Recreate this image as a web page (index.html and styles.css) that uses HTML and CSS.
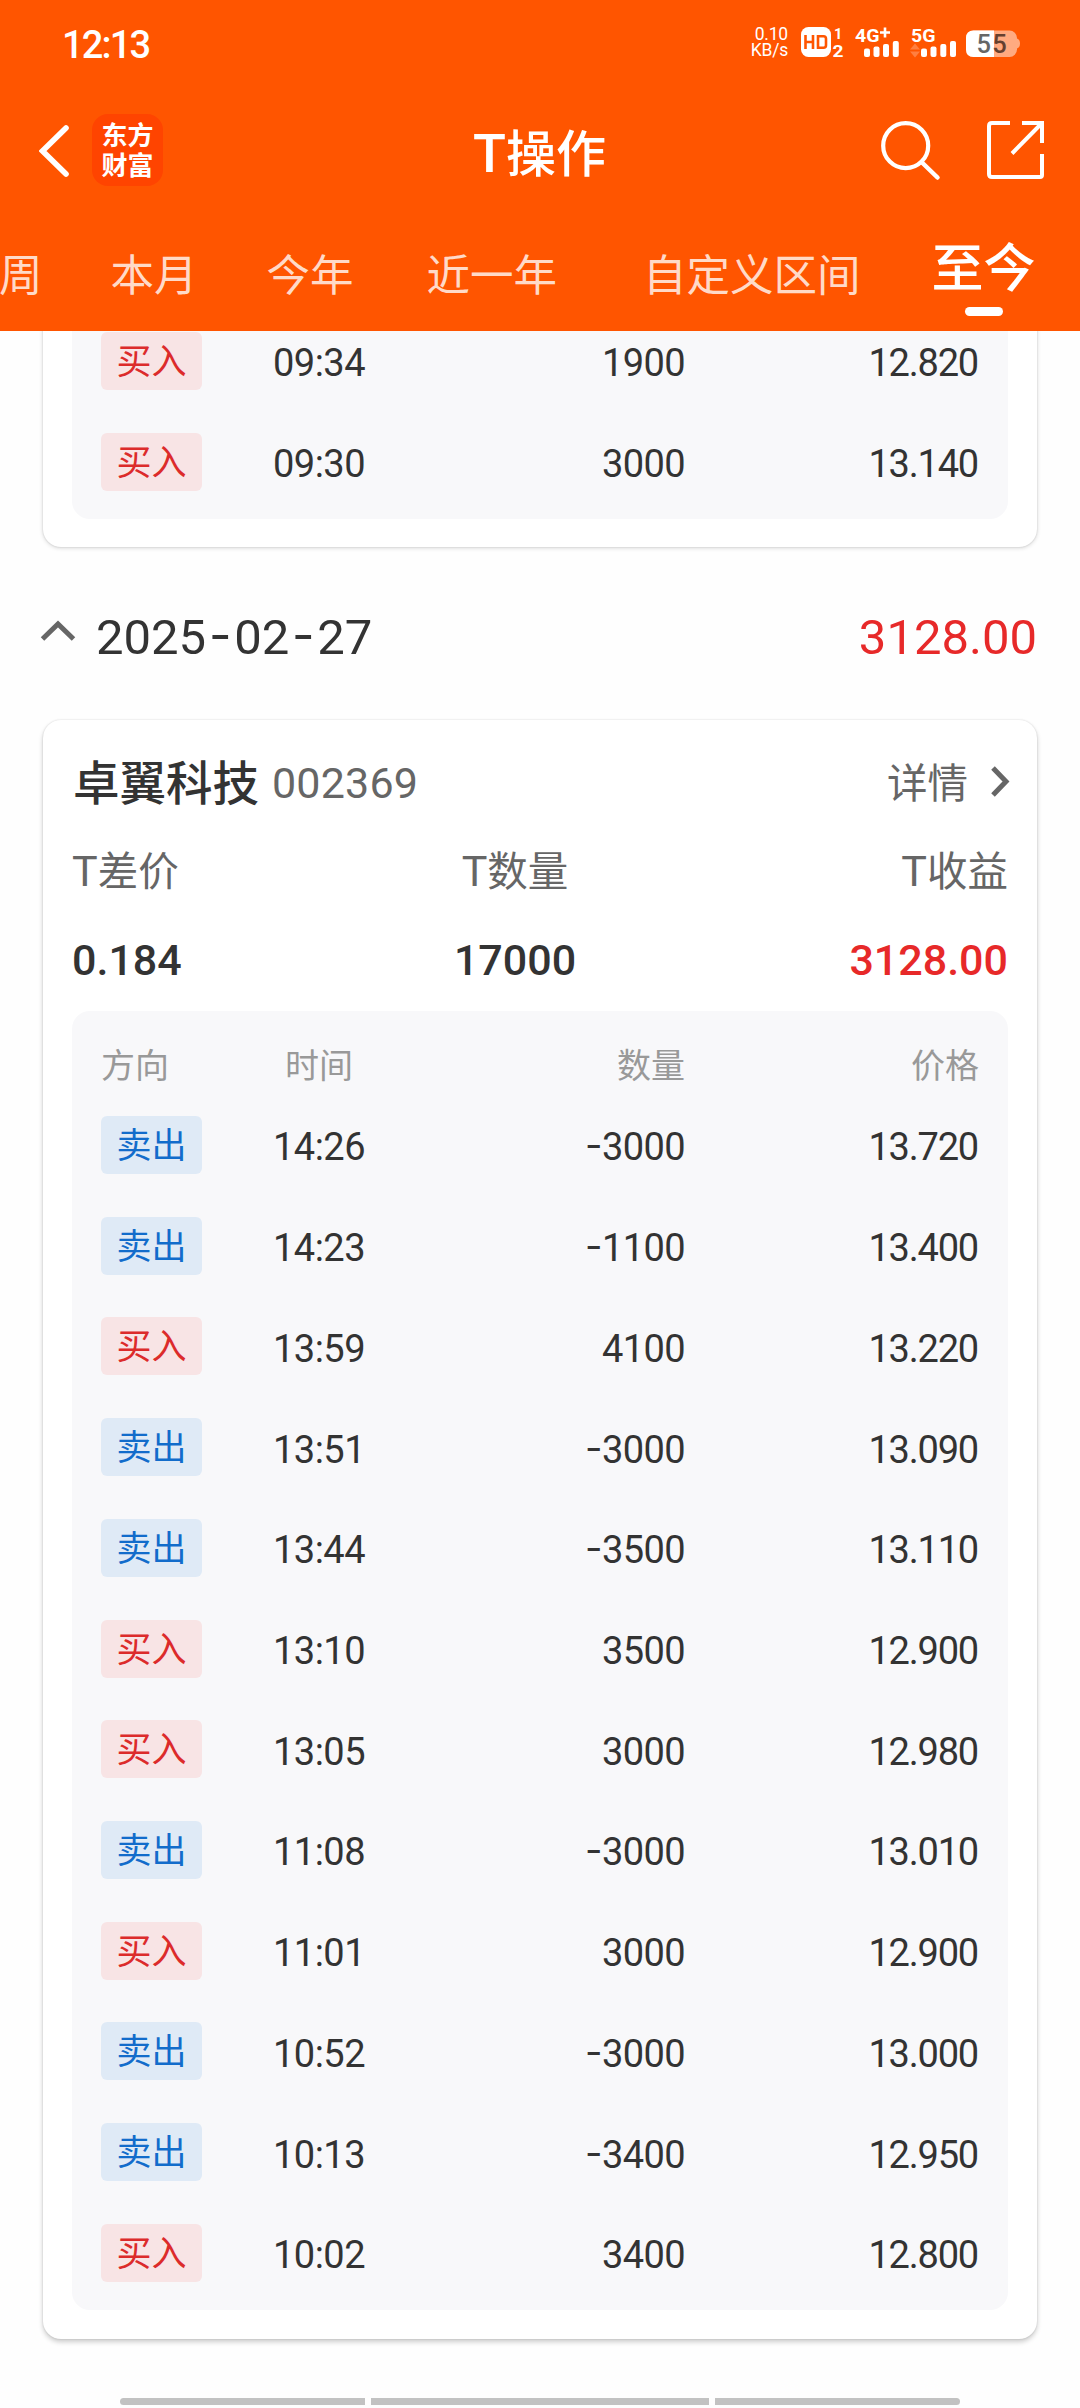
FILE: index.html
```html
<!DOCTYPE html>
<html lang="zh-CN">
<head>
<meta charset="utf-8">
<title>T操作</title>
<link rel="stylesheet" href="styles.css">
</head>
<body>
<div class="screen">
<header class="header">
  <div class="status">
    <span class="clock">12:13</span>
    <div class="status-icons">
      <div class="speed"><span>0.10</span><span>KB/s</span></div>
      <svg class="status-svg" width="244" height="36" viewBox="796 25 244 36">
        <rect x="801" y="27" width="30" height="30" rx="7.5" fill="#fff"/>
        <g fill="none" stroke="#ff5500" stroke-width="2.6"><path d="M805.5 35v14M813 35v14M805.5 42h7.5M818 36.3h5.5q2.5 0 2.5 2.5v6.400q0 2.500-2.500 2.500h-5.500z"/></g>
        <g fill="#fff" class="svg-text">
          <text x="834" y="38.500" font-size="14.500">1</text>
          <text x="832.500" y="57" font-size="16.500" textLength="11" lengthAdjust="spacingAndGlyphs">2</text>
          <text x="855" y="41.800" font-size="19" textLength="24.500" lengthAdjust="spacingAndGlyphs">4G</text>
          <text x="911" y="41.800" font-size="19" textLength="24.500" lengthAdjust="spacingAndGlyphs">5G</text>
        </g>
        <path d="M880 32.500h10M885 27.500v10" stroke="#fff" stroke-width="2.600"/>
        <g fill="#fff">
          <rect x="864" y="48.500" width="6" height="8.500" rx="2"/><rect x="873.500" y="46.500" width="6" height="10.500" rx="2"/><rect x="883" y="44" width="6" height="13" rx="2"/><rect x="892.800" y="41" width="6" height="16" rx="2"/>
          <rect x="921" y="48.500" width="6" height="8.500" rx="2"/><rect x="930.500" y="46.500" width="6" height="10.500" rx="2"/><rect x="940.300" y="44" width="6" height="13" rx="2"/><rect x="950" y="41" width="6" height="16" rx="2"/>
        </g>
        <path d="M915 43.500l5 6h-10zM915 57.500l5-6h-10z" fill="#ff7f40"/>
        <rect x="966" y="30.500" width="51" height="26.500" rx="7.500" fill="#ffaa80"/>
        <path d="M1017 38.500q3 1 3 5t-3 5z" fill="#ffaa80"/>
        <path d="M973.500 30.500H994V57h-20.500q-7.500 0-7.500-7.500v-11.500q0-7.500 7.500-7.500z" fill="#fff"/>
        <text class="battery-text" x="976.500" y="53" font-size="25.500" fill="#666">5</text>
        <text class="battery-text" x="992.300" y="53" font-size="25.500" fill="#66402f">5</text>
      </svg>
    </div>
  </div>
  <div class="titlebar">
    <div class="left">
      <svg width="32" height="56" viewBox="39 123 32 56"><path d="M66 128L42.500 151L66 174" fill="none" stroke="#fff" stroke-width="5.600" stroke-linecap="round"/></svg>
      <div class="logo"><span>东方</span><span>财富</span></div>
    </div>
    <h1><span class="t">T</span>操作</h1>
    <div class="right">
      <svg width="62" height="62" viewBox="880 119 62 62"><circle cx="905.700" cy="145.700" r="22.500" fill="none" stroke="#fff" stroke-width="4.200"/><path d="M922 162.500L937.500 177.500" stroke="#fff" stroke-width="4.500" stroke-linecap="round"/></svg>
      <svg width="62" height="62" viewBox="985 119 62 62"><path d="M1010 123H992q-3 0-3 3v48q0 3 3 3h48q2 0 2-2V154M1042 143V123H1022M1042 123L1012 153.500" fill="none" stroke="#fff" stroke-width="4"/></svg>
    </div>
  </div>
  <nav class="tabs">
    <span class="tab t-week">周</span>
    <span class="tab t-month">本月</span>
    <span class="tab t-year">今年</span>
    <span class="tab t-last">近一年</span>
    <span class="tab t-custom">自定义区间</span>
    <span class="tab active">至今</span>
  </nav>
</header>

<main class="content">
  <section class="card card-cut">
    <div class="panel panel-cut">
      <div class="row"><span class="tag buy">买入</span><span class="time">09:34</span><span class="num">1900</span><span class="num price">12.820</span></div>
      <div class="row"><span class="tag buy">买入</span><span class="time">09:30</span><span class="num">3000</span><span class="num price">13.140</span></div>
    </div>
  </section>

  <div class="day">
    <svg width="36" height="24" viewBox="40 619 36 24"><path d="M42.500 639L58 624L73.500 639" fill="none" stroke="#666" stroke-width="5"/></svg>
    <span class="date">2025<span class="dash">-</span>02<span class="dash">-</span>27</span>
    <span class="day-total">3128.00</span>
  </div>

  <section class="card">
    <div class="stock">
      <span class="name">卓翼科技</span>
      <span class="code">002369</span>
      <span class="detail">详情</span>
      <svg width="20" height="34" viewBox="990 764 20 34"><path d="M993 767L1006 780.500L993 794" fill="none" stroke="#666" stroke-width="5"/></svg>
    </div>
    <div class="summary labels"><span><span class="t">T</span>差价</span><span><span class="t">T</span>数量</span><span><span class="t">T</span>收益</span></div>
    <div class="summary values"><span>0.184</span><span>17000</span><span class="red">3128.00</span></div>
    <div class="panel">
      <div class="row head"><span>方向</span><span class="time">时间</span><span class="num">数量</span><span class="num">价格</span></div>
      <div class="row"><span class="tag sell">卖出</span><span class="time">14:26</span><span class="num"><span class="dash">-</span>3000</span><span class="num price">13.720</span></div>
      <div class="row"><span class="tag sell">卖出</span><span class="time">14:23</span><span class="num"><span class="dash">-</span>1100</span><span class="num price">13.400</span></div>
      <div class="row"><span class="tag buy">买入</span><span class="time">13:59</span><span class="num">4100</span><span class="num price">13.220</span></div>
      <div class="row"><span class="tag sell">卖出</span><span class="time">13:51</span><span class="num"><span class="dash">-</span>3000</span><span class="num price">13.090</span></div>
      <div class="row"><span class="tag sell">卖出</span><span class="time">13:44</span><span class="num"><span class="dash">-</span>3500</span><span class="num price">13.110</span></div>
      <div class="row"><span class="tag buy">买入</span><span class="time">13:10</span><span class="num">3500</span><span class="num price">12.900</span></div>
      <div class="row"><span class="tag buy">买入</span><span class="time">13:05</span><span class="num">3000</span><span class="num price">12.980</span></div>
      <div class="row"><span class="tag sell">卖出</span><span class="time">11:08</span><span class="num"><span class="dash">-</span>3000</span><span class="num price">13.010</span></div>
      <div class="row"><span class="tag buy">买入</span><span class="time">11:01</span><span class="num">3000</span><span class="num price">12.900</span></div>
      <div class="row"><span class="tag sell">卖出</span><span class="time">10:52</span><span class="num"><span class="dash">-</span>3000</span><span class="num price">13.000</span></div>
      <div class="row"><span class="tag sell">卖出</span><span class="time">10:13</span><span class="num"><span class="dash">-</span>3400</span><span class="num price">12.950</span></div>
      <div class="row"><span class="tag buy">买入</span><span class="time">10:02</span><span class="num">3400</span><span class="num price">12.800</span></div>
    </div>
  </section>
</main>

<div class="gesture"><i></i><i></i><i></i></div>
</div>
</body>
</html>
```
FILE: styles.css
```css
* { box-sizing: border-box; }
body {
  margin: 0;
  background: #fefefe;
  color: #333;
  font-family: Roboto, "Noto Sans CJK SC", sans-serif;
}
svg { display: block; flex: none; }
.screen {
  width: 1080px;
  height: 2408px;
  display: flex;
  flex-direction: column;
  overflow: hidden;
}

/* Header */
.header {
  height: 331px;
  flex: none;
  background: #ff5500;
  color: #fff;
}
.status {
  height: 88px;
  padding: 0 40px 0 62px;
  display: flex;
  justify-content: space-between;
}
.clock { font-size: 38px; font-weight: 500; line-height: 91px; letter-spacing: -1.8px; }
.status-icons { display: flex; gap: 8px; padding-top: 25px; }
.speed {
  display: flex;
  flex-direction: column;
  padding-top: 2px;
  font-size: 17.5px;
  line-height: 15.5px;
  text-align: right;
  letter-spacing: -0.2px;
}
.svg-text { font-weight: 700; }
.battery-text { font-weight: 500; }

.titlebar {
  height: 126px;
  padding: 0 33px 0 39px;
  display: grid;
  grid-template-columns: 1fr auto 1fr;
  align-items: center;
}
.left { display: flex; align-items: center; gap: 21px; }
.logo {
  width: 71px;
  height: 72px;
  margin-top: -2px;
  padding-top: 2px;
  border-radius: 16px;
  background: #ff4400;
  display: flex;
  flex-direction: column;
  justify-content: center;
  align-items: center;
  font-size: 26px;
  font-weight: 700;
  line-height: 30px;
}
h1 { margin: 8px 7px 0 0; font-size: 50px; font-weight: 500; line-height: 60px; }
h1 .t { font-size: 54px; line-height: 1; }
.right { display: flex; justify-content: flex-end; gap: 43px; margin-top: -3px; }

.tabs {
  height: 117px;
  display: flex;
  align-items: flex-start;
  white-space: nowrap;
}
.tab { font-size: 43.5px; line-height: 60px; padding-top: 33px; color: #ffdac8; }
.t-week { margin-left: -1px; }
.t-month { margin-left: 68px; }
.t-year { margin-left: 69px; }
.t-last { margin-left: 73px; }
.t-custom { margin-left: 86px; }
.active {
  margin-left: 71px;
  font-size: 52px;
  font-weight: 500;
  color: #fff;
  padding-top: 26px;
  display: flex;
  flex-direction: column;
  align-items: center;
  gap: 7px;
}
.active::after {
  content: "";
  width: 38px;
  height: 9px;
  border-radius: 5px;
  background: #fff;
}

/* Scrolling content */
.content { flex: 1; min-height: 0; overflow: hidden; padding: 0 43px; }
.card {
  height: 1619px;
  padding: 30px 29px 29px;
  border-radius: 18px;
  background: #fff;
  box-shadow: 0 3px 5px rgba(0, 0, 0, .2), 0 0 2px rgba(0, 0, 0, .14);
}
.card-cut { height: auto; margin-top: -20.46px; padding: 0 29px 28px; box-shadow: 0 1px 4px rgba(0, 0, 0, .16), 0 0 2px rgba(0, 0, 0, .14); }
.panel {
  padding: 0 29px 7px;
  border-radius: 18px;
  background: #f8f8fa;
}
.row {
  height: 100.73px;
  display: grid;
  grid-template-columns: 101px 234px 1fr 294px;
  align-items: center;
  font-size: 38px;
  line-height: 48px;
}
.dash {
  display: inline-block;
  font-family: Inter, sans-serif;
  line-height: 1;
  transform: translateY(-2px);
}
.time { text-align: center; padding-top: 5px; letter-spacing: -.5px; }
.num { text-align: right; padding-top: 5px; letter-spacing: -.6px; }
.price { letter-spacing: -1.2px; padding-right: 1px; }
.head { height: 83.6px; padding-top: 26px; font-size: 34px; color: #999; }
.head span { padding-top: 0; letter-spacing: 0; }
.tag {
  height: 58px;
  border-radius: 6px;
  font-size: 35px;
  line-height: 61px;
  text-align: center;
}
.buy { background: #f8e4e5; color: #dc2b2b; }
.sell { background: #dfeaf6; color: #126ccb; }

.day {
  height: 173px;
  display: flex;
  align-items: center;
  line-height: 60px;
  font-size: 49px;
}
.day svg { margin: -4px 20px 0 -3px; }
.day > span { padding-top: 9px; }
.day .dash { width: 28px; text-align: center; }
.day-total { margin-left: auto; color: #e72929; }

.stock {
  height: 64px;
  display: flex;
  align-items: center;
  line-height: 60px;
  color: #666;
}
.name { font-size: 46.5px; font-weight: 500; color: #333; margin-left: 1px; padding-top: 5px; }
.code { font-size: 43px; margin-left: 13px; padding-top: 3px; letter-spacing: .2px; }
.detail { font-size: 40.5px; margin: 0 22px 0 auto; padding-top: 4px; }
.stock svg { margin-right: -2px; }
.summary {
  display: grid;
  grid-template-columns: 286px 1fr 336px;
  text-align: center;
}
.summary > span:first-child { text-align: left; }
.summary > span:last-child { text-align: right; }
.labels { height: 114px; font-size: 40.5px; line-height: 117px; color: #666; }
.labels .t { font-size: 43px; line-height: 1; }
.values { height: 83px; font-size: 43px; line-height: 65px; font-weight: 500; }
.red { color: #e72929; }

/* System navigation hint */
.gesture { flex: none; height: 10px; display: flex; gap: 6px; justify-content: center; }
.gesture i { width: 245px; height: 7px; background: #c2c2c2; }
.gesture i:nth-child(2) { width: 338px; }
.gesture i:first-child { border-radius: 4px 0 0 4px; }
.gesture i:last-child { border-radius: 0 4px 4px 0; }
```
